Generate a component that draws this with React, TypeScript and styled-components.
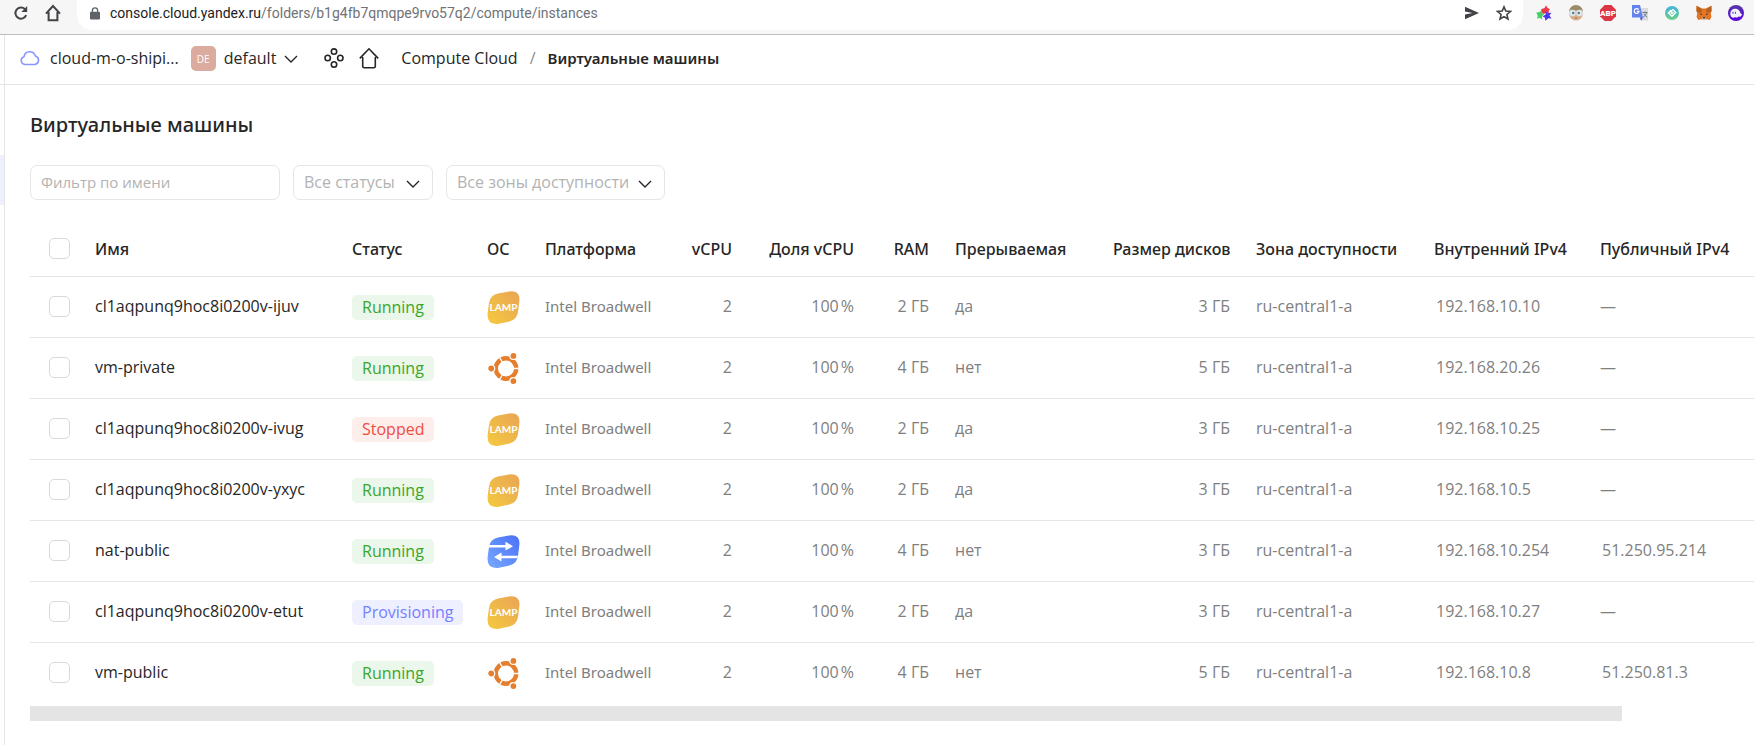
import React from 'react';
import styled, { createGlobalStyle, css } from 'styled-components';

const wide = `"Open Sans", "Noto Sans", sans-serif`;
const compact = `"Noto Sans", "Open Sans", sans-serif`;
const line = '#e5e5e5';

const GlobalStyle = createGlobalStyle`
  * { box-sizing: border-box; }
  body {
    margin: 0;
    background: #fff;
    color: #262626;
    font: 400 16px/20px ${wide};
  }
  svg { display: block; flex: none; }
`;

const Page = styled.div`
  display: flex;
  flex-direction: column;
  min-height: 100vh;
  overflow: hidden;
`;

/* Browser bar */

const BrowserBar = styled.div`
  display: flex;
  align-items: flex-start;
  height: 35px;
  padding-left: 13px;
  background: #f6f6f6;
  border-bottom: 1px solid #bdbdbd;
`;

const PlainButton = styled.button`
  display: flex;
  align-items: center;
  justify-content: center;
  padding: 0;
  border: 0;
  background: none;
  color: inherit;
  cursor: pointer;
`;

const BarButton = styled(PlainButton)`
  width: 16px;
  height: 26px;
  margin-right: 16px;
  color: #414346;
`;

const AddressBar = styled.div`
  display: flex;
  flex: 1;
  align-items: center;
  height: 30px;
  margin-right: 5px;
  padding: 0 11px 4px 13px;
  background: #fff;
  border-radius: 0 0 15px 15px;
`;

const Url = styled.div`
  flex: 1;
  padding-left: 10px;
  color: #707276;
  font: 400 14px/20px Roboto, sans-serif;
`;

const UrlHost = styled.span`
  color: #202124;
`;

const AddressAction = styled(PlainButton)`
  width: 16px;
  height: 26px;
  margin-left: 16px;
  color: #414346;
`;

const Extensions = styled.div`
  display: flex;
  gap: 16px;
  padding: 0 10px 0 8px;
`;

const ExtensionButton = styled(PlainButton)`
  width: 16px;
  height: 26px;
`;

/* Console frame */

const Frame = styled.div`
  display: flex;
  flex: 1;
`;

const Rail = styled.nav`
  flex: none;
  width: 5px;
  border-right: 1px solid ${line};
`;

const RailTop = styled.div`
  height: 50px;
  border-bottom: 1px solid ${line};
`;

const RailItem = styled.a`
  display: block;
  height: 50px;
  margin-top: 70px;
  background: #eef0ff;
`;

const Workspace = styled.div`
  flex: 1;
  min-width: 0;
`;

const Header = styled.header`
  display: flex;
  align-items: center;
  height: 50px;
  padding: 0 15px 3px;
  border-bottom: 1px solid ${line};
`;

const HeaderButton = styled(PlainButton)`
  gap: 10px;
  margin-right: 12px;
  font: 400 16px/20px ${wide};
`;

const FolderButton = styled(HeaderButton)`
  gap: 8px;
  margin-right: 26px;
`;

const FolderBadge = styled.span`
  width: 25px;
  height: 25px;
  border-radius: 5px;
  background: #dbab9f;
  color: #fff;
  font: 400 10px/27px ${wide};
`;

const IconLink = styled.a`
  margin-right: 15px;
  color: #262626;
`;

const Breadcrumbs = styled.nav`
  display: flex;
  gap: 12px;
  padding-left: 7px;
  color: #8c8c8c;
`;

const Crumb = styled.a<{ $current?: boolean }>`
  color: #262626;
  text-decoration: none;
  ${(p) => p.$current && css`font: 600 15px/20px ${compact};`}
`;

/* Instances */

const Content = styled.main`
  padding: 28px 0 24px 25px;
`;

const Title = styled.h1`
  margin: 0 0 28px;
  font: 500 20px/24px ${compact};
`;

const Filters = styled.form`
  display: flex;
  gap: 13px;
  margin-bottom: 22px;
`;

const NameFilter = styled.input`
  width: 250px;
  height: 35px;
  padding: 0 10px 2px;
  border: 1px solid ${line};
  border-radius: 7px;
  color: #262626;
  font: 400 15px/20px ${wide};
  &::placeholder { color: #b3b3b3; opacity: 1; }
`;

const SelectBox = styled.label<{ $width: number }>`
  display: grid;
  align-items: center;
  width: ${(p) => p.$width}px;
  height: 35px;
  & > * { grid-area: 1 / 1; }
  & > svg { justify-self: end; margin-right: 13px; pointer-events: none; }
`;

const Select = styled.select`
  appearance: none;
  width: 100%;
  height: 35px;
  padding: 0 11px 2px 10px;
  border: 1px solid ${line};
  border-radius: 7px;
  background: #fff;
  color: #b3b3b3;
  font: 400 16px/20px ${wide};
`;

const TableArea = styled.div`
  overflow: hidden;
`;

const Table = styled.table`
  width: 100%;
  min-width: 1724px;
  table-layout: fixed;
  border-collapse: separate;
  border-spacing: 0;
`;

const Col = styled.col<{ $width?: number }>`
  ${(p) => p.$width && css`width: ${p.$width}px;`}
`;

type Align = 'left' | 'right';

const HeadCell = styled.th<{ $align?: Align }>`
  height: 55px;
  padding: 0 13px 1px;
  border-bottom: 1px solid ${line};
  font: 500 16px/20px ${compact};
  text-align: ${(p) => p.$align ?? 'left'};
  white-space: nowrap;
  &:first-child { padding-left: 19px; padding-right: 0; }
`;

const Row = styled.tr`
  &:last-child > td { border-bottom-color: transparent; }
`;

const Cell = styled.td<{ $align?: Align; $strong?: boolean; $compact?: boolean }>`
  height: 61px;
  padding: 0 13px 2px;
  border-bottom: 1px solid ${line};
  color: ${(p) => (p.$strong ? '#262626' : '#808080')};
  text-align: ${(p) => p.$align ?? 'left'};
  white-space: nowrap;
  ${(p) => p.$compact && css`font: 400 15px/20px ${compact};`}
  &:first-child { padding-left: 19px; padding-right: 0; }
`;

const IconCell = styled(Cell)`
  padding-bottom: 0;
`;

const Address = styled.span`
  padding-left: 2px;
`;

const Checkbox = styled.input`
  appearance: none;
  display: block;
  width: 21px;
  height: 21px;
  margin: 0;
  border: 1px solid #d9d9d9;
  border-radius: 5px;
  background: #fff;
`;

const statusColors = {
  Running: { ink: '#3aa629', fill: '#ebf7ea' },
  Stopped: { ink: '#f04d42', fill: '#fdeeec' },
  Provisioning: { ink: '#7480ff', fill: '#eef0ff' },
};

type Status = keyof typeof statusColors;

const StatusPill = styled.span<{ $status: Status }>`
  display: inline-block;
  height: 25px;
  padding: 0 10px;
  border-radius: 5px;
  background: ${(p) => statusColors[p.$status].fill};
  color: ${(p) => statusColors[p.$status].ink};
  line-height: 25px;
  vertical-align: middle;
`;

const ScrollThumb = styled.div`
  height: 15px;
  margin: 2px 132px 0 0;
  background: #e4e4e4;
`;

/* Icons */

const Chevron = () => (
  <svg width="14" height="14" viewBox="0 0 14 14" fill="none" stroke="#262626" strokeWidth="1.4">
    <path d="M1 5l6 6 6-6" />
  </svg>
);

const ReloadIcon = () => (
  <svg width="16" height="16" viewBox="0 0 16 16" fill="none" stroke="currentColor" strokeWidth="2">
    <path d="M13.2 10.2A5.6 5.6 0 1 1 12 4.1" />
    <path d="M14.2 1v6H8.4z" fill="currentColor" stroke="none" />
  </svg>
);

const BrowserHomeIcon = () => (
  <svg width="16" height="18" viewBox="0 0 16 18" fill="none" stroke="currentColor" strokeWidth="2">
    <path d="M1 9.6L8 2l7 7.6M3.6 8v8.2h8.8V8" />
  </svg>
);

const LockIcon = () => (
  <svg width="10" height="13" viewBox="0 0 10 13">
    <path d="M2.4 5V3.4a2.6 2.6 0 0 1 5.2 0V5" fill="none" stroke="#5f6368" strokeWidth="1.3" />
    <rect y="4.8" width="10" height="7.8" rx="1" fill="#5f6368" />
  </svg>
);

const SendIcon = () => (
  <svg width="16" height="16" viewBox="0 0 16 16" fill="currentColor">
    <path d="M1 1.8L15 8 1 14.2V9.6L8.5 8 1 6.4z" />
  </svg>
);

const StarIcon = () => (
  <svg width="16" height="16" viewBox="0 0 16 16" fill="none" stroke="currentColor" strokeWidth="1.6">
    <path d="M8 1.9l1.8 4.2 4.6.4-3.5 3 1.1 4.5L8 11.6 4 14l1.1-4.5-3.5-3 4.6-.4z" />
  </svg>
);

const StarsExtension = () => (
  <svg width="16" height="16" viewBox="0 0 16 16">
    <path d="M5.5 7.5L5 4.2 8.6 3 10 .2l1.4 2.6 2.6 1.4-1.4 1.8.6 2.6-3-.9L7.6 9z" fill="#f0384c" />
    <path d="M.2 7.5l3-.2L5.2 5.6l.8 2.6 2.2 1.6-2.2 1.2.2 3.6-2.6-1.8-2.6 1 .8-3z" fill="#43d05f" />
    <path d="M9.6 5.8l1.8 2.4 4-.4-2 2.8 2.2 3-3.2-.4-3 2.6-.6-3.2-2.2-1.2 3-2z" fill="#4a36f0" />
  </svg>
);

const FaceExtension = () => (
  <svg width="16" height="16" viewBox="0 0 16 16">
    <circle cx="8" cy="8.500" r="7" fill="#d9b08c" />
    <path d="M1 7a7 7 0 0 1 14 0l-2-1.500H3z" fill="#9b8a68" />
    <circle cx="4.500" cy="8" r="3.300" fill="#dbe7ec" />
    <circle cx="11.500" cy="8" r="3.300" fill="#dbe7ec" />
    <circle cx="5.200" cy="8" r="1.200" fill="#55798c" />
    <circle cx="10.800" cy="8" r="1.200" fill="#55798c" />
    <path d="M6.500 13h3" stroke="#a66c52" />
  </svg>
);

const BlockerExtension = () => (
  <svg width="16" height="16" viewBox="0 0 16 16">
    <path d="M4.700 0h6.600L16 4.700v6.600L11.300 16H4.700L0 11.300V4.700z" fill="#dc3545" />
    <text x="8" y="11" fill="#fff" fontFamily="Roboto, sans-serif" fontSize="8" fontWeight="900" textAnchor="middle">ABP</text>
  </svg>
);

const TranslateExtension = () => (
  <svg width="16" height="16" viewBox="0 0 16 16">
    <path d="M6 3h10v12.500H9z" fill="#d9dbdf" />
    <path d="M10.500 7.500h5M13 6.500v1M14.500 7.500c-.5 2.500-2 4-3.500 4.800M11.800 8.800l3.200 3.500" fill="none" stroke="#6d7b8c" />
    <path d="M0 0h8l3 12.500H0z" fill="#6583ee" />
    <path d="M8 12.500h3L9 15.800z" fill="#3a55c4" />
    <path d="M6.600 4.600A2.400 2.400 0 1 0 7 6.400H4.800" fill="none" stroke="#fff" strokeWidth="1.200" />
  </svg>
);

const EditorExtension = () => (
  <svg width="16" height="16" viewBox="0 0 16 16">
    <defs>
      <linearGradient id="leaf" x2="0" y2="1">
        <stop stopColor="#45b3dc" />
        <stop offset="1" stopColor="#6ccf83" />
      </linearGradient>
    </defs>
    <circle cx="8" cy="8" r="7" fill="url(#leaf)" />
    <path d="M9.500 7L8 8.500 6.500 7 9 4.600 11.800 7.500 8 11.300 4.400 7.900 7.200 5" fill="none" stroke="#fff" strokeWidth="1.300" />
  </svg>
);

const FoxExtension = () => (
  <svg width="16" height="16" viewBox="0 0 16 16">
    <path d="M.6.8L6.300 3.500h3.400L15.400.8l.4 5-1 2.500.6 3.700-1.600 3-3-.8L8.800 15H7.200l-2-.8-3 .8-1.600-3 .6-3.700-1-2.500z" fill="#e27625" />
    <path d="M.6.8L6.300 5 4.800 8 .8 6.500zM15.400.8L9.700 5l1.500 3 4-1.500z" fill="#b5601f" />
    <path d="M3.800 8.300l2.400 1-.8.900zM12.200 8.300l-2.400 1 .8.900z" fill="#3b2a22" />
    <path d="M6.200 12.400h3.600l.5 2.100-1.500.8H7.200l-1.500-.8z" fill="#d9c5b4" />
    <path d="M6.800 12.200h2.400v1.300H6.800z" fill="#2b2523" />
  </svg>
);

const GhostExtension = () => (
  <svg width="16" height="16" viewBox="0 0 16 16">
    <defs>
      <linearGradient id="night" x2="0" y2="1">
        <stop stopColor="#5438a8" />
        <stop offset="1" stopColor="#5a00e0" />
      </linearGradient>
    </defs>
    <circle cx="8" cy="8" r="8" fill="url(#night)" />
    <path d="M2.400 9.800C2 5.600 4.500 3.800 7.300 3.800c3.200 0 4.600 2.400 5.200 4.400l1.300.8c.3 2.300-2 3.400-3.300 2.400-1.200 1.600-2.700 1.400-3.300.6-1.600 1.300-4.600.6-4.800-2.200z" fill="#f4f2fc" />
    <path d="M5 6.800v2M7.400 6.800v2" stroke="#4f30b0" strokeWidth="1" />
  </svg>
);

const CloudIcon = () => (
  <svg width="20" height="16" viewBox="0 0 20 16" fill="none" stroke="#8a96ff" strokeWidth="1.600">
    <path d="M5 14.500a4 4 0 0 1-1-7.800 5.800 5.800 0 0 1 11.300-.7A4.400 4.400 0 0 1 15.200 14.500z" strokeLinejoin="round" />
  </svg>
);

const ServicesIcon = () => (
  <svg width="20" height="20" viewBox="0 0 20 20" fill="none" stroke="currentColor" strokeWidth="1.600">
    <circle cx="10" cy="3.600" r="2.700" />
    <circle cx="3.700" cy="10" r="2.700" />
    <circle cx="16.300" cy="10" r="2.700" />
    <circle cx="10" cy="16.400" r="2.700" />
  </svg>
);

const HomeIcon = () => (
  <svg width="20" height="22" viewBox="0 0 20 22" fill="none" stroke="currentColor" strokeWidth="1.600">
    <path d="M.8 11.400L10 1.800l9.200 9.600M3.700 10v9.200q0 1.500 1.500 1.500h9.600q1.500 0 1.500-1.500V10" />
  </svg>
);

const tileShape = 'M11 2.600L22 .5Q33.600-1 32.300 10.500L31 20.800Q30 28.700 22.500 30.500L12 32.700Q-.8 34.500.7 21.500L2 12Q3 4.300 11 2.600z';

const LampIcon = () => (
  <svg width="33" height="33" viewBox="0 0 33 33" role="img" aria-label="LAMP">
    <defs>
      <linearGradient id="lamp" x1="0" y1="1" x2="1" y2="0">
        <stop stopColor="#f4ca3f" />
        <stop offset="1" stopColor="#e9a455" />
      </linearGradient>
    </defs>
    <path d={tileShape} fill="url(#lamp)" />
    <text x="16.500" y="20" fill="#fff" fontFamily="Lato, sans-serif" fontSize="10" fontWeight="700" textAnchor="middle">LAMP</text>
  </svg>
);

const NatIcon = () => (
  <svg width="33" height="33" viewBox="0 0 33 33" role="img" aria-label="NAT">
    <defs>
      <linearGradient id="nat" x1="0" y1="1" x2="1" y2="0">
        <stop stopColor="#78a9ff" />
        <stop offset="1" stopColor="#4a6ff8" />
      </linearGradient>
    </defs>
    <path d={tileShape} fill="url(#nat)" />
    <path d="M1.500 10h17V6.800l7.500 4.400-7.500 4.400v-3H1zM31.500 20.800h-17v-3.200L7 22l7.500 4.500v-3.200H30z" fill="#fff" />
  </svg>
);

const UbuntuIcon = () => (
  <svg width="33" height="33" viewBox="0 0 33 33" role="img" aria-label="Ubuntu">
    <circle cx="19" cy="16.500" r="10" fill="none" stroke="#e57f2e" strokeWidth="4.800" />
    <path d="M19 16.500h14M19 16.500L12 4.400M19 16.500L12 28.600" stroke="#fff" strokeWidth="1.300" />
    <g fill="#e57f2e" stroke="#fff" strokeWidth="1.200">
      <circle cx="4.200" cy="16.500" r="3.500" />
      <circle cx="26.400" cy="3.900" r="3.500" />
      <circle cx="26.400" cy="29.100" r="3.500" />
    </g>
    <circle cx="19" cy="16.500" r="7.900" fill="#fff" />
  </svg>
);

const osIcons = { lamp: LampIcon, ubuntu: UbuntuIcon, nat: NatIcon };

/* Data */

interface Instance {
  name: string;
  status: Status;
  os: keyof typeof osIcons;
  ram: number;
  preemptible: boolean;
  disk: number;
  internal: string;
  external?: string;
}

const instances: Instance[] = [
  { name: 'cl1aqpunq9hoc8i0200v-ijuv', status: 'Running', os: 'lamp', ram: 2, preemptible: true, disk: 3, internal: '192.168.10.10' },
  { name: 'vm-private', status: 'Running', os: 'ubuntu', ram: 4, preemptible: false, disk: 5, internal: '192.168.20.26' },
  { name: 'cl1aqpunq9hoc8i0200v-ivug', status: 'Stopped', os: 'lamp', ram: 2, preemptible: true, disk: 3, internal: '192.168.10.25' },
  { name: 'cl1aqpunq9hoc8i0200v-yxyc', status: 'Running', os: 'lamp', ram: 2, preemptible: true, disk: 3, internal: '192.168.10.5' },
  { name: 'nat-public', status: 'Running', os: 'nat', ram: 4, preemptible: false, disk: 3, internal: '192.168.10.254', external: '51.250.95.214' },
  { name: 'cl1aqpunq9hoc8i0200v-etut', status: 'Provisioning', os: 'lamp', ram: 2, preemptible: true, disk: 3, internal: '192.168.10.27' },
  { name: 'vm-public', status: 'Running', os: 'ubuntu', ram: 4, preemptible: false, disk: 5, internal: '192.168.10.8', external: '51.250.81.3' },
];

const columns: { title: string; width?: number; align?: Align }[] = [
  { title: 'Имя', width: 257 },
  { title: 'Статус', width: 135 },
  { title: 'ОС', width: 58 },
  { title: 'Платформа', width: 133 },
  { title: 'vCPU', width: 80, align: 'right' },
  { title: 'Доля vCPU', width: 122, align: 'right' },
  { title: 'RAM', width: 75, align: 'right' },
  { title: 'Прерываемая', width: 158 },
  { title: 'Размер дисков', width: 143, align: 'right' },
  { title: 'Зона доступности', width: 178 },
  { title: 'Внутренний IPv4', width: 166 },
  { title: 'Публичный IPv4' },
];

const extensions = [
  { name: 'Stars', Icon: StarsExtension },
  { name: 'Profile', Icon: FaceExtension },
  { name: 'Adblock Plus', Icon: BlockerExtension },
  { name: 'Translate', Icon: TranslateExtension },
  { name: 'Editor', Icon: EditorExtension },
  { name: 'MetaMask', Icon: FoxExtension },
  { name: 'Phantom', Icon: GhostExtension },
];

const InstanceRow = ({ vm }: { vm: Instance }) => {
  const OsIcon = osIcons[vm.os];
  return (
    <Row>
      <Cell><Checkbox type="checkbox" aria-label={vm.name} /></Cell>
      <Cell $strong>{vm.name}</Cell>
      <IconCell><StatusPill $status={vm.status}>{vm.status}</StatusPill></IconCell>
      <IconCell><OsIcon /></IconCell>
      <Cell $compact>Intel Broadwell</Cell>
      <Cell $align="right">2</Cell>
      <Cell $align="right">{'100\u202f%'}</Cell>
      <Cell $align="right">{`${vm.ram}\u00a0ГБ`}</Cell>
      <Cell>{vm.preemptible ? 'да' : 'нет'}</Cell>
      <Cell $align="right">{`${vm.disk}\u00a0ГБ`}</Cell>
      <Cell>ru-central1-a</Cell>
      <Cell><Address>{vm.internal}</Address></Cell>
      <Cell>{vm.external ? <Address>{vm.external}</Address> : '—'}</Cell>
    </Row>
  );
};

export default function App() {
  return (
    <Page>
      <GlobalStyle />
      <BrowserBar>
        <BarButton aria-label="Reload"><ReloadIcon /></BarButton>
        <BarButton aria-label="Home"><BrowserHomeIcon /></BarButton>
        <AddressBar>
          <LockIcon />
          <Url><UrlHost>console.cloud.yandex.ru</UrlHost>/folders/b1g4fb7qmqpe9rvo57q2/compute/instances</Url>
          <AddressAction aria-label="Share"><SendIcon /></AddressAction>
          <AddressAction aria-label="Bookmark"><StarIcon /></AddressAction>
        </AddressBar>
        <Extensions>
          {extensions.map(({ name, Icon }) => (
            <ExtensionButton key={name} aria-label={name}><Icon /></ExtensionButton>
          ))}
        </Extensions>
      </BrowserBar>
      <Frame>
        <Rail>
          <RailTop />
          <RailItem href="#instances" aria-label="Виртуальные машины" />
        </Rail>
        <Workspace>
          <Header>
            <HeaderButton><CloudIcon />cloud-m-o-shipi...</HeaderButton>
            <FolderButton><FolderBadge>DE</FolderBadge>default<Chevron /></FolderButton>
            <IconLink href="#services" aria-label="Все сервисы"><ServicesIcon /></IconLink>
            <IconLink href="#home" aria-label="Главная"><HomeIcon /></IconLink>
            <Breadcrumbs>
              <Crumb href="#compute">Compute Cloud</Crumb>
              <span>/</span>
              <Crumb href="#instances" $current>Виртуальные машины</Crumb>
            </Breadcrumbs>
          </Header>
          <Content>
            <Title>Виртуальные машины</Title>
            <Filters>
              <NameFilter placeholder="Фильтр по имени" aria-label="Фильтр по имени" />
              <SelectBox $width={140}>
                <Select aria-label="Статус"><option>Все статусы</option></Select>
                <Chevron />
              </SelectBox>
              <SelectBox $width={219}>
                <Select aria-label="Зона доступности"><option>Все зоны доступности</option></Select>
                <Chevron />
              </SelectBox>
            </Filters>
            <TableArea>
              <Table>
                <colgroup>
                  <Col $width={52} />
                  {columns.map((c) => <Col key={c.title} $width={c.width} />)}
                </colgroup>
                <thead>
                  <tr>
                    <HeadCell><Checkbox type="checkbox" aria-label="Выбрать все" /></HeadCell>
                    {columns.map((c) => <HeadCell key={c.title} $align={c.align}>{c.title}</HeadCell>)}
                  </tr>
                </thead>
                <tbody>
                  {instances.map((vm) => <InstanceRow key={vm.name} vm={vm} />)}
                </tbody>
              </Table>
              <ScrollThumb />
            </TableArea>
          </Content>
        </Workspace>
      </Frame>
    </Page>
  );
}
